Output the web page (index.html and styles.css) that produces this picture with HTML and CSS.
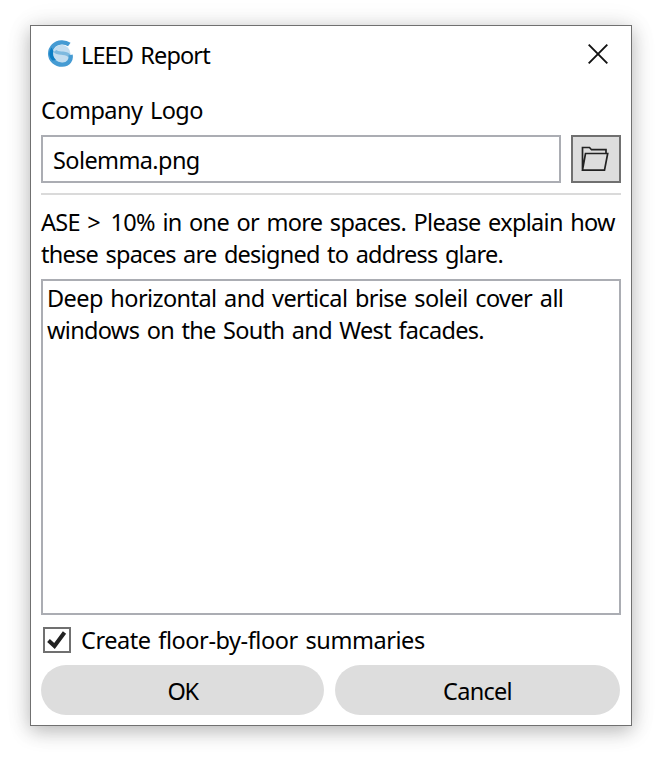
FILE: index.html
```html
<!DOCTYPE html>
<html lang="en">
<head>
<meta charset="utf-8">
<title>LEED Report</title>
<link rel="stylesheet" href="styles.css">
</head>
<body>
<main class="dialog">
  <header class="titlebar">
    <svg class="logo" width="26" height="28" viewBox="0 0 26 28" fill="none">
      <circle cx="14.500" cy="13.800" r="9" fill="#c2ddf0"/>
      <path d="M8 11c2 2.500 5 2 8 2.200 3.500.3 5.500 1 6.500 3" stroke="#7db9df" stroke-width="3.400"/>
      <path d="M22.300 4.500C18 1.500 11 1.500 6.700 5.500c-4.700 4.700-4.700 12 0 16 5 4.300 12.500 4 15.500 0 1.500-2 1.800-4 1.300-6.500" stroke="#459bd3" stroke-width="4.400"/>
      <path d="M4.500 7.500c-3 4.500-3 9 1 13l3.500-.5c-3-3-3.500-6-2.500-9Z" fill="#0b7dc4"/>
    </svg>
    <h1 class="title">LEED Report</h1>
    <svg class="close" width="20" height="20" viewBox="0 0 20 20"><path d="M.7.7 19.300 19.300M19.300.7.7 19.300" stroke="#111" stroke-width="1.900"/></svg>
  </header>
  <div class="label">Company Logo</div>
  <div class="file-row">
    <div class="input">Solemma.png</div>
    <div class="browse">
      <svg width="28" height="26" viewBox="0 0 28 26" fill="none" stroke="#222" stroke-width="1.700"><path d="M1.500 24.200V1.500H8.500L10.500 3.700H25V7.500M1.500 24.200 4.500 7.500H26.700L23.500 24.200Z"/></svg>
    </div>
  </div>
  <hr class="rule">
  <p class="prompt"><span class="p1">ASE &gt; <span class="pct">10%</span> in one or more spaces. Please explain how</span><br><span class="p2">these spaces are designed to address glare.</span></p>
  <div class="textarea"><span class="t1">Deep horizontal and vertical brise soleil cover all</span><br><span class="t2">windows on the South and West facades.</span></div>
  <div class="check-row">
    <span class="checkbox"><svg width="24" height="22" viewBox="0 0 24 22"><path d="M3.500 11.500 9.500 17 19.500 3.500" fill="none" stroke="#222" stroke-width="4"/></svg></span>
    <span class="check-label">Create floor-by-floor summaries</span>
  </div>
  <footer class="actions">
    <div class="button ok">OK</div>
    <div class="button cancel">Cancel</div>
  </footer>
</main>
</body>
</html>
```
FILE: styles.css
```css
* { box-sizing: border-box; }
body { margin: 0; padding: 25px 27px 31px 30px; background: #fff; color: #000; font: 23.5px/32px "Noto Sans", sans-serif; word-spacing: 2px; white-space: nowrap; overflow: hidden; }
.dialog { width: 602px; height: 701px; padding: 0 10px; border: 1px solid #707070; background: #fff; box-shadow: 0 5px 18px rgba(0,0,0,.25), 0 1px 28px rgba(0,0,0,.07); }
.titlebar { display: flex; align-items: center; height: 60px; padding: 0 13px 4px 6px; }
.title { margin: 2px auto 0 8px; font-size: 23.5px; font-weight: 400; letter-spacing: -.88px; }
.label { height: 49px; padding-top: 8px; letter-spacing: -.55px; }
.file-row { display: flex; gap: 10px; height: 48px; }
.input { flex: 1; border: 2px solid #abadb3; padding: 7px 10px; letter-spacing: -.6px; }
.browse { display: grid; place-items: center; width: 50px; padding-right: 2px; border: 2px solid #707070; background: #ddd; }
.rule { height: 2px; margin: 10px 0; border: 0; background: #dadada; }
.prompt { height: 74px; margin: 0; padding-top: 1px; }
.p1 { letter-spacing: -.68px; }
.pct { margin-left: 3px; }
.p2 { letter-spacing: -.74px; }
.textarea { height: 336px; border: 2px solid #abadb3; padding: 1px 4px; }
.t1 { letter-spacing: -.58px; }
.t2 { letter-spacing: -.68px; }
.check-row { display: flex; align-items: center; gap: 10px; height: 50px; padding-left: 2px; }
.check-label { letter-spacing: -.44px; }
.checkbox { width: 28px; height: 26px; border: 2px solid #707070; }
.checkbox svg { display: block; }
.actions { display: grid; grid-template-columns: 283px 285px; gap: 11px; }
.button { height: 50px; border-radius: 25px; background: #ddd; line-height: 52px; text-align: center; letter-spacing: -.7px; }
.ok { letter-spacing: -1.4px; }
```
